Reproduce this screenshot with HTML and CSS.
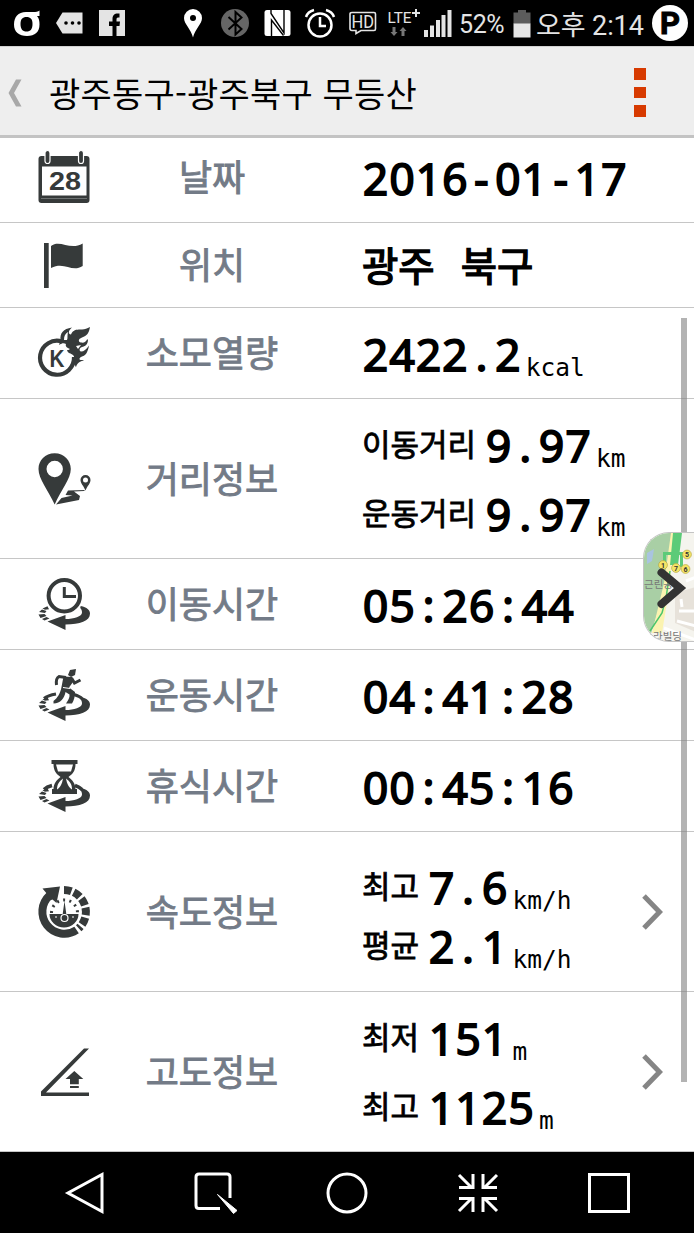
FILE: index.html
```
<!DOCTYPE html>
<html lang="ko">
<head>
    <meta charset="UTF-8">
    <meta name="viewport" content="width=device-width, initial-scale=1.0">
    <title>광주동구-광주북구 무등산</title>
    <link rel="stylesheet" href="styles.css">
</head>
<body>
    <!-- shared shapes -->
    <svg class="defs" width="0" height="0">
        <symbol id="orbit" viewBox="0 0 52 52">
            <path d="M42.700 28C49 29.500 52 32 52 35.500 52 43 42 46.500 27.500 46.500V52L9.500 43.500 27.500 37v4C36 41 44 38.500 44 34.500c0-2-.5-3-1.800-4.500z"/>
            <path d="M4.500 30.500l5-2.300 1.500 3-4 .5zM1 34l3-2.500 4.500 1.500-1.500 2zM.5 36.500l6-.5 2 2-6 2zM4 41l4.500-2 3 1.500-5 2z"/>
        </symbol>
        <symbol id="chevron" viewBox="0 0 22 38">
            <path d="M2 3l15.500 16L2 35" fill="none" stroke="#858585" stroke-width="5"/>
        </symbol>
    </svg>

    <div class="status-bar">
        <svg class="status-left" width="130" height="46" viewBox="0 0 130 46">
            <path fill-rule="evenodd" d="M39.500 10.500v5.500H37c2 2 2.500 5 2.500 8.500C39.500 32 35 36 27 36s-13-4-13-11.500S18 12 26 12h7c3 0 5-.5 6.500-1.500zM26.500 17c-4 0-6 2-6 7s2 7.500 6 7.500 6-2.500 6-7.500-2-7-6-7z" fill="#fff"/>
            <path d="M56 23l6.500-10.500h20v21h-20z" fill="#e4e4e4"/>
            <circle cx="66" cy="23" r="1.800"/><circle cx="72.500" cy="23" r="1.800"/><circle cx="79" cy="23" r="1.800"/>
            <path d="M99 10h26v26H99z" fill="#e4e4e4"/>
            <path d="M112.500 36V26H109v-4.500h3.500V19c0-4 2-6 7-5.500v4c-2 0-3 0-3 2v2h3.500l-.5 4.500h-3v10z"/>
        </svg>
        <svg class="status-right" width="275" height="46" viewBox="180 0 275 46">
            <path d="M193 37.500C191 29 184 24 184 18a9 9 0 0 1 18 0c0 6-7 11-9 19.500z" fill="#fff"/>
            <circle cx="193" cy="18" r="3"/>
            <circle cx="235" cy="23" r="14" fill="#666"/>
            <path d="M228.500 17l13 12-6 5.500V12l6 5.500-13 12" fill="none" stroke="#000" stroke-width="2"/>
            <rect x="264.500" y="10" width="26" height="26" rx="2.500" fill="#fff"/>
            <path d="M271.500 36.500V20l12 15.500" fill="none" stroke="#000" stroke-width="1.400"/>
            <path d="M271 10v3.500L284 33V10" fill="none" stroke="#000" stroke-width="1.400"/>
            <g fill="none" stroke="#fff" stroke-width="2.500">
                <circle cx="320" cy="25" r="11.500"/>
                <path d="M320 17v9h6M306 17c1-3 4-6 8-7M334 17c-1-3-4-6-8-7"/>
            </g>
            <path d="M352 12.500h22q1.500 0 1.500 1.500v15q0 1.500-1.500 1.500H361l-5 3v-3h-4q-2 0-2-2V14q0-1.500 2-1.500z" fill="none" stroke="#e4e4e4" stroke-width="1.600"/>
            <text class="hd" x="351.500" y="27.500" textLength="22.500" lengthAdjust="spacingAndGlyphs">HD</text>
            <text class="lte" x="387.500" y="23" textLength="24" lengthAdjust="spacingAndGlyphs">LTE</text>
            <path d="M412 13h8M416 9v8" stroke="#e4e4e4" stroke-width="2"/>
            <path d="M394 36l-3.500-4h2v-5h3v5h2zM403 27l3.500 4h-2v5h-3v-5h-2z" fill="#777"/>
            <path d="M424 30h4v7h-4zM430 25.500h4V37h-4zM436 20h4v17h-4zM441.500 15h4v22h-4zM447.500 10h4v27h-4z" fill="#e4e4e4"/>
        </svg>
        <span class="percent">52%</span>
        <svg class="battery" width="18" height="28" viewBox="0 0 18 28">
            <path d="M5 0h8v2.500h4.500V14H.5V2.500H5z" fill="#5c5c5c"/>
            <path d="M.5 13.500h17V27.500H.5z" fill="#e6e6e6"/>
        </svg>
        <span class="clock">오후 2:14</span>
        <span class="parking">P</span>
    </div>

    <header class="title-bar">
        <svg class="back" width="16" height="28" viewBox="0 0 16 28">
            <path d="M8 .5h5.500L6 14l7.500 13.500H8L.5 14z" fill="#a8a8a8"/>
        </svg>
        <h1>광주동구-광주북구 무등산</h1>
        <div class="more"><span></span><span></span><span></span></div>
    </header>

    <main class="record">
        <div class="row row-first">
            <svg class="icon" viewBox="0 0 52 52">
                <rect x=".5" y="5" width="51" height="47" rx="3"/>
                <path d="M4 15.500h44.500V44.500H4z" fill="#fff"/>
                <path d="M3 47.500h46" stroke="#6c7070" stroke-width="1"/>
                <g stroke="#fff" stroke-width="1.200">
                    <rect x="7" y="-.5" width="5" height="13" rx="2.500"/>
                    <rect x="40.500" y="-.5" width="5" height="13" rx="2.500"/>
                </g>
                <text class="day" x="11" y="38.500" textLength="32" lengthAdjust="spacingAndGlyphs">28</text>
            </svg>
            <div class="label">날짜</div>
            <div class="values">
                <div class="line"><b>2016<i>-</i>01<i>-</i>17</b></div>
            </div>
        </div>

        <div class="row row-short">
            <svg class="icon" viewBox="0 0 52 52">
                <path d="M6 4h4.700v45H6zM13 7c9-7 19 5 31.700-2.500V27c-11 7-18-5-31.700 2z"/>
            </svg>
            <div class="label">위치</div>
            <div class="values">
                <div class="line place">광주 북구</div>
            </div>
        </div>

        <div class="row">
            <svg class="icon" viewBox="0 0 52 52">
                <path d="M24 14.500A17 17 0 1 0 36 30" fill="none" stroke="#363a3a" stroke-width="4.200"/>
                <path d="M22.500 13C22 6 25 2 34 .5 30 4 30 7 33 7.500 35 2 40 2.500 44 2.500c3 0 5-1 8-2.500-1 6-3 9-8 10.500-4 1.500-4 4.500-1 5 3 .5 5-.5 6-3 1 0 1 0 1 0 0 5-3 7-6 7.500-3 1-3 4-1 4.500 3 0 5-2 8-6-1 6-3 10-7 11-3 1-3 3-1.500 3.500L46 33c-3 2-6 1-8 7-2-1 0-9-3-12-2-2-5-1-6-5 1 0 2 0 3-1-3-1-5-3-4-5-2-1-4-1-7 1z"/>
                <path d="M26 13c0-4 1-6 4-8-1 5 0 6-1 8zM38 19l5-1-3 4z" fill="#fff"/>
                <text class="letter" x="11.500" y="40" textLength="15" lengthAdjust="spacingAndGlyphs">K</text>
            </svg>
            <div class="label">소모열량</div>
            <div class="values">
                <div class="line"><b>2422<i>.</i>2</b><span class="unit">kcal</span></div>
            </div>
        </div>

        <div class="row row-tall">
            <svg class="icon" viewBox="0 0 52 52">
                <path fill-rule="evenodd" d="M16.700.3C7 .3.5 7.500.5 16 .5 26 10 37 16.700 51.500 23 37 32.800 26 32.800 16 32.800 7.500 26 .3 16.700.3zm0 7.500a8.200 8.200 0 1 1 0 16.400 8.200 8.200 0 0 1 0-16.400z"/>
                <path fill-rule="evenodd" d="M47.500 22a5 5 0 0 0-5 5c0 3.500 3.300 6 5 10.500 1.700-4.500 5-7 5-10.500a5 5 0 0 0-5-5zm0 2.500a2.500 2.500 0 1 1 0 5 2.500 2.500 0 0 1 0-5z"/>
                <path d="M47 37l-17 .5-2.500 4.500 7 .5-11 2.500-5.500 6.500 23-4.500 1-4-6-4.500 10-.5z"/>
            </svg>
            <div class="label">거리정보</div>
            <div class="values">
                <div class="line"><span class="kind">이동거리</span><b>9<i>.</i>97</b><span class="unit">km</span></div>
                <div class="line"><span class="kind">운동거리</span><b>9<i>.</i>97</b><span class="unit">km</span></div>
            </div>
        </div>

        <div class="row">
            <svg class="icon" viewBox="0 0 52 52">
                <use href="#orbit"/>
                <circle cx="26.300" cy="17.700" r="18.800" fill="#fff"/>
                <circle cx="26.300" cy="17.700" r="15.700" fill="none" stroke="#363a3a" stroke-width="4"/>
                <path d="M26.300 9v9.500H38" fill="none" stroke="#363a3a" stroke-width="3"/>
            </svg>
            <div class="label">이동시간</div>
            <div class="values">
                <div class="line"><b>05<i>:</i>26<i>:</i>44</b></div>
            </div>
        </div>

        <div class="row">
            <svg class="icon" viewBox="0 0 52 52">
                <use href="#orbit"/>
                <path d="M6 29.500c3-2.500 6-3.500 12-4.500M44 29.500c-2-2-5-3-8-4" fill="none" stroke="#363a3a" stroke-width="3"/>
                <path d="M32 1l6-1-1 6-4 2-3-2z"/>
                <path d="M25.500 7.500L34 8l1 5-4 5.500 6 4.500c0 5-1 8-3 11.500h-6c2-3 4-6 3.500-9L27.500 23c-1 6-5 11.500-12 11.500v-2.500c4-3 7-8 8-14z"/>
                <path d="M28 8.500l-7-1C18 9 18 12 18.500 16M33.500 9l3 5 6-3" fill="none" stroke="#363a3a" stroke-width="3"/>
                <path d="M25 18.500l7 1" stroke="#fff" stroke-width="1"/>
            </svg>
            <div class="label">운동시간</div>
            <div class="values">
                <div class="line"><b>04<i>:</i>41<i>:</i>28</b></div>
            </div>
        </div>

        <div class="row">
            <svg class="icon" viewBox="0 0 52 52">
                <use href="#orbit"/>
                <path d="M6 29.500c2-2 4-3 8-4M44 29.500c-2-2-4-3-7-4" fill="none" stroke="#363a3a" stroke-width="3.500"/>
                <path d="M13.500 0h26v4h-2c0 7-3 10-7 13 4 3 7 7 7 12h1.500v5h-25v-5h1.500c0-5 3-9 7-12-4-3-7-6-7-13h-2z"/>
                <path d="M18 4.500h17l-2 7H20zM25 18.500c-4 3-6 6-6 11 3-2 5-5 6-11zM28 18.500c4 3 6 6 6 11-3-2-5-5-6-11z" fill="#fff"/>
            </svg>
            <div class="label">휴식시간</div>
            <div class="values">
                <div class="line"><b>00<i>:</i>45<i>:</i>16</b></div>
            </div>
        </div>

        <div class="row row-tall row-tight">
            <svg class="icon" viewBox="0 0 52 52">
                <path d="M11.500 9.500A22 22 0 0 0 38.600 44" fill="none" stroke="#363a3a" stroke-width="8"/>
                <path d="M4.500 2.500L22 .5l-3.500 16.500-4-3.500-6 2 1-7z"/>
                <path d="M26 4a22 22 0 0 1 14.700 38.300" fill="none" stroke="#363a3a" stroke-width="8" stroke-dasharray="7.500 2.500"/>
                <path d="M11.500 28h29a14.500 13.500 0 0 1-29 0zM26.500 15l1.800 13h-3.600z"/>
                <path d="M13.500 27a13 13 0 0 1 26 0" fill="none" stroke="#363a3a" stroke-width="3" stroke-dasharray="2 4.300"/>
                <circle cx="26.500" cy="32" r="3.500" fill="#363a3a" stroke="#fff" stroke-width="1.200"/>
                <path d="M17 31h2M34 31h2" stroke="#fff"/>
            </svg>
            <div class="label">속도정보</div>
            <div class="values">
                <div class="line"><span class="kind">최고</span><b>7<i>.</i>6</b><span class="unit">km/h</span></div>
                <div class="line"><span class="kind">평균</span><b>2<i>.</i>1</b><span class="unit">km/h</span></div>
            </div>
            <svg class="arrow" width="22" height="38"><use href="#chevron"/></svg>
        </div>

        <div class="row row-tall">
            <svg class="icon" viewBox="0 0 52 52">
                <path d="M51 2.500h-5L3 45.500V50h48v-3.500H8z"/>
                <path d="M36.300 25l9 8h-4.500v5.300H32V33h-4.500zM32 40h8.800v2H32z"/>
            </svg>
            <div class="label">고도정보</div>
            <div class="values">
                <div class="line"><span class="kind">최저</span><b>151</b><span class="unit">m</span></div>
                <div class="line"><span class="kind">최고</span><b>1125</b><span class="unit">m</span></div>
            </div>
            <svg class="arrow" width="22" height="38"><use href="#chevron"/></svg>
        </div>

        <div class="scrollbar"></div>

        <!-- map drawer handle -->
        <div class="map-handle">
            <svg width="52" height="110" viewBox="0 0 52 110">
                <path d="M0 0h52v110H0z" fill="#f5f4ee"/>
                <path d="M0 0h28L20 60 4 110H0z" fill="#a9cfa5"/>
                <path d="M3 20l7-4-2 12-5 3z" fill="#a9c4e0"/>
                <path d="M27 0h3l-4 50-8 50H8l12-50z" fill="#fbf3b0"/>
                <path d="M31 60l21-6v45l-21-9z" fill="#e7e2da"/>
                <path d="M35 78h17M33 88l19 5M37 66l1 8M20 95l32 12M42 48l10-4" stroke="#fff" stroke-width="3"/>
                <path d="M26 38L22 65 18 80 6 98" fill="none" stroke="#4cc56c" stroke-width="1.500"/>
                <path d="M29 0h9l-4 32h-8z" fill="#5ccb78"/>
                <path d="M20.500 32V20.500h17V34" fill="none" stroke="#5ccb78" stroke-width="3"/>
                <g fill="#f5e566" stroke="#b7a943" stroke-width=".7">
                    <circle cx="43" cy="21.500" r="4.400"/><circle cx="19" cy="32" r="4.400"/>
                    <circle cx="32" cy="35" r="4.400"/><circle cx="41.500" cy="36" r="4.400"/>
                </g>
                <g class="exits">
                    <text x="43" y="24.200">5</text><text x="19" y="34.700">1</text>
                    <text x="32" y="37.700">7</text><text x="41.500" y="38.700">6</text>
                </g>
                <text class="map-text" x="0" y="55">근린공</text>
                <text class="map-text" x="9" y="107">라빌딩</text>
                <path d="M17.500 39.500L36 55 17.500 71" fill="none" stroke="#333" stroke-width="8" stroke-linecap="round"/>
            </svg>
        </div>
    </main>

    <nav class="nav-bar">
        <svg viewBox="0 0 44 44"><path d="M39 3.500v37L5 22z"/></svg>
        <svg viewBox="0 0 44 44"><path d="M26 37.500H5q-3 0-3-3V6q0-3 3-3h28q3 0 3 3v21"/><path class="solid" d="M23.500 23.500l19.500 16-3.500 3z"/></svg>
        <svg viewBox="0 0 44 44"><circle cx="22" cy="22" r="19"/></svg>
        <svg viewBox="0 0 44 44"><path d="M3 4l13 13M3 16.500h14V3M41 4L28 17M41 16.500H27V3M3 40l13-13M3 27.500h14V41M41 40L28 27M41 27.500H27V41"/></svg>
        <svg viewBox="0 0 44 44"><path d="M2.500 3.500h39v37h-39z"/></svg>
    </nav>
</body>
</html>
```
FILE: styles.css
```
* {
    box-sizing: border-box;
}
body {
    margin: 0;
    width: 694px;
    height: 1233px;
    overflow: hidden;
    background-color: #fff;
    color: #000;
    font-family: "Noto Sans CJK KR", sans-serif;
}
svg {
    display: block;
    flex: none;
}
.defs {
    display: none;
}

/* status bar */
.status-bar {
    display: flex;
    align-items: center;
    height: 46px;
    background-color: #000;
    color: #e4e4e4;
    font-family: Roboto, "Noto Sans CJK KR", sans-serif;
    white-space: nowrap;
}
.status-right {
    margin-left: 50px;
}
.hd {
    font: 18px Roboto, sans-serif;
    fill: #e4e4e4;
}
.lte {
    font: 15.500px Roboto, sans-serif;
    fill: #e4e4e4;
}
.percent {
    width: 58px;
    padding: 2px 0 0 4px;
    font-size: 25px;
    letter-spacing: -0.4px;
}
.battery {
    margin-top: 1px;
}
.clock {
    width: 121px;
    padding: 0 0 0 5px;
    font-size: 27px;
    letter-spacing: -0.1px;
}
.parking {
    width: 36px;
    height: 36px;
    border-radius: 50%;
    background-color: #fff;
    color: #000;
    font-size: 31px;
    font-weight: 700;
    line-height: 37px;
    text-align: center;
    -webkit-text-stroke: 1px #000;
}

/* title bar */
.title-bar {
    display: flex;
    align-items: center;
    height: 92px;
    padding: 3px 0 0 8px;
    border-top: 1px solid #d2d2d2;
    border-bottom: 3px solid #c3c3c3;
    background-color: #eee;
}
.title-bar h1 {
    margin: 0;
    padding-left: 25px;
    font-size: 34px;
    font-weight: 400;
    letter-spacing: 0.2px;
    line-height: 50px;
}
.more {
    display: flex;
    flex-direction: column;
    gap: 7px;
    margin: 0 48px 0 auto;
}
.more span {
    width: 12px;
    height: 11.500px;
    background-color: #d73a00;
}

/* record rows */
.record {
    position: relative;
}
.row {
    display: grid;
    grid-template-columns: 128px 168px 346px 22px;
    align-items: center;
    height: 91px;
    border-bottom: 1px solid #c6c6c6;
}
.row-first {
    height: 85px;
    padding-bottom: 6px;
}
.row-short {
    height: 85px;
}
.row-tall {
    height: 160px;
}
.icon {
    width: 52px;
    height: 52px;
    margin-left: 38px;
    overflow: visible;
    fill: #363a3a;
}
.day {
    font: bold 25px "Liberation Sans", sans-serif;
}
.letter {
    font: bold 23px "Liberation Sans", sans-serif;
}
.label {
    padding-bottom: 4px;
    color: #737b87;
    font-size: 36px;
    line-height: 50px;
    text-align: center;
    -webkit-text-stroke: 0.900px #737b87;
}
.values {
    padding: 2px 0 0 66px;
    white-space: nowrap;
}
.line {
    height: 69px;
    font-family: "Open Sans", "Noto Sans CJK KR", sans-serif;
    font-size: 44px;
    line-height: 69px;
}
.line b {
    margin-left: 1px;
    font-weight: 400;
    letter-spacing: 1.300px;
    -webkit-text-stroke: 2px #000;
}
.line i {
    display: inline-block;
    width: 26.500px;
    font-style: normal;
    text-align: center;
}
.line.place {
    font-family: "Noto Sans CJK KR", sans-serif;
    font-size: 39.500px;
    line-height: 63px;
    word-spacing: 15px;
    -webkit-text-stroke: 1.400px #000;
}
.row-tight .values {
    padding-top: 11px;
}
.row-tight .line {
    height: 59px;
    line-height: 59px;
}
.kind {
    margin-right: 9px;
    font-family: "Noto Sans CJK KR", sans-serif;
    font-size: 31px;
    line-height: 0;
    vertical-align: 6px;
    -webkit-text-stroke: 0.800px #000;
}
.unit {
    margin-left: 4px;
    font-family: "DejaVu Sans Mono", monospace;
    font-size: 24.500px;
    line-height: 0;
    vertical-align: -5px;
}

/* overlays */
.scrollbar {
    position: absolute;
    top: 180px;
    left: 681px;
    width: 6px;
    height: 764px;
    background-color: rgba(128, 128, 128, 0.6);
}
.map-handle {
    position: absolute;
    top: 394px;
    right: 0;
    width: 51px;
    height: 110px;
    overflow: hidden;
    border: 1px solid #c4c4c4;
    border-right: 0;
    border-radius: 26px 0 0 26px;
}
.map-text {
    font: 10.500px "Noto Sans CJK KR", sans-serif;
    fill: #777;
}
.exits {
    font: bold 7px Roboto, sans-serif;
    fill: #333;
    text-anchor: middle;
}

/* navigation bar */
.nav-bar {
    display: flex;
    justify-content: space-between;
    height: 81px;
    padding: 19px 63px 0;
    background-color: #000;
}
.nav-bar svg {
    width: 44px;
    height: 44px;
    fill: none;
    stroke: #fff;
    stroke-width: 3;
}
.nav-bar .solid {
    fill: #fff;
    stroke-width: 1;
}
```
